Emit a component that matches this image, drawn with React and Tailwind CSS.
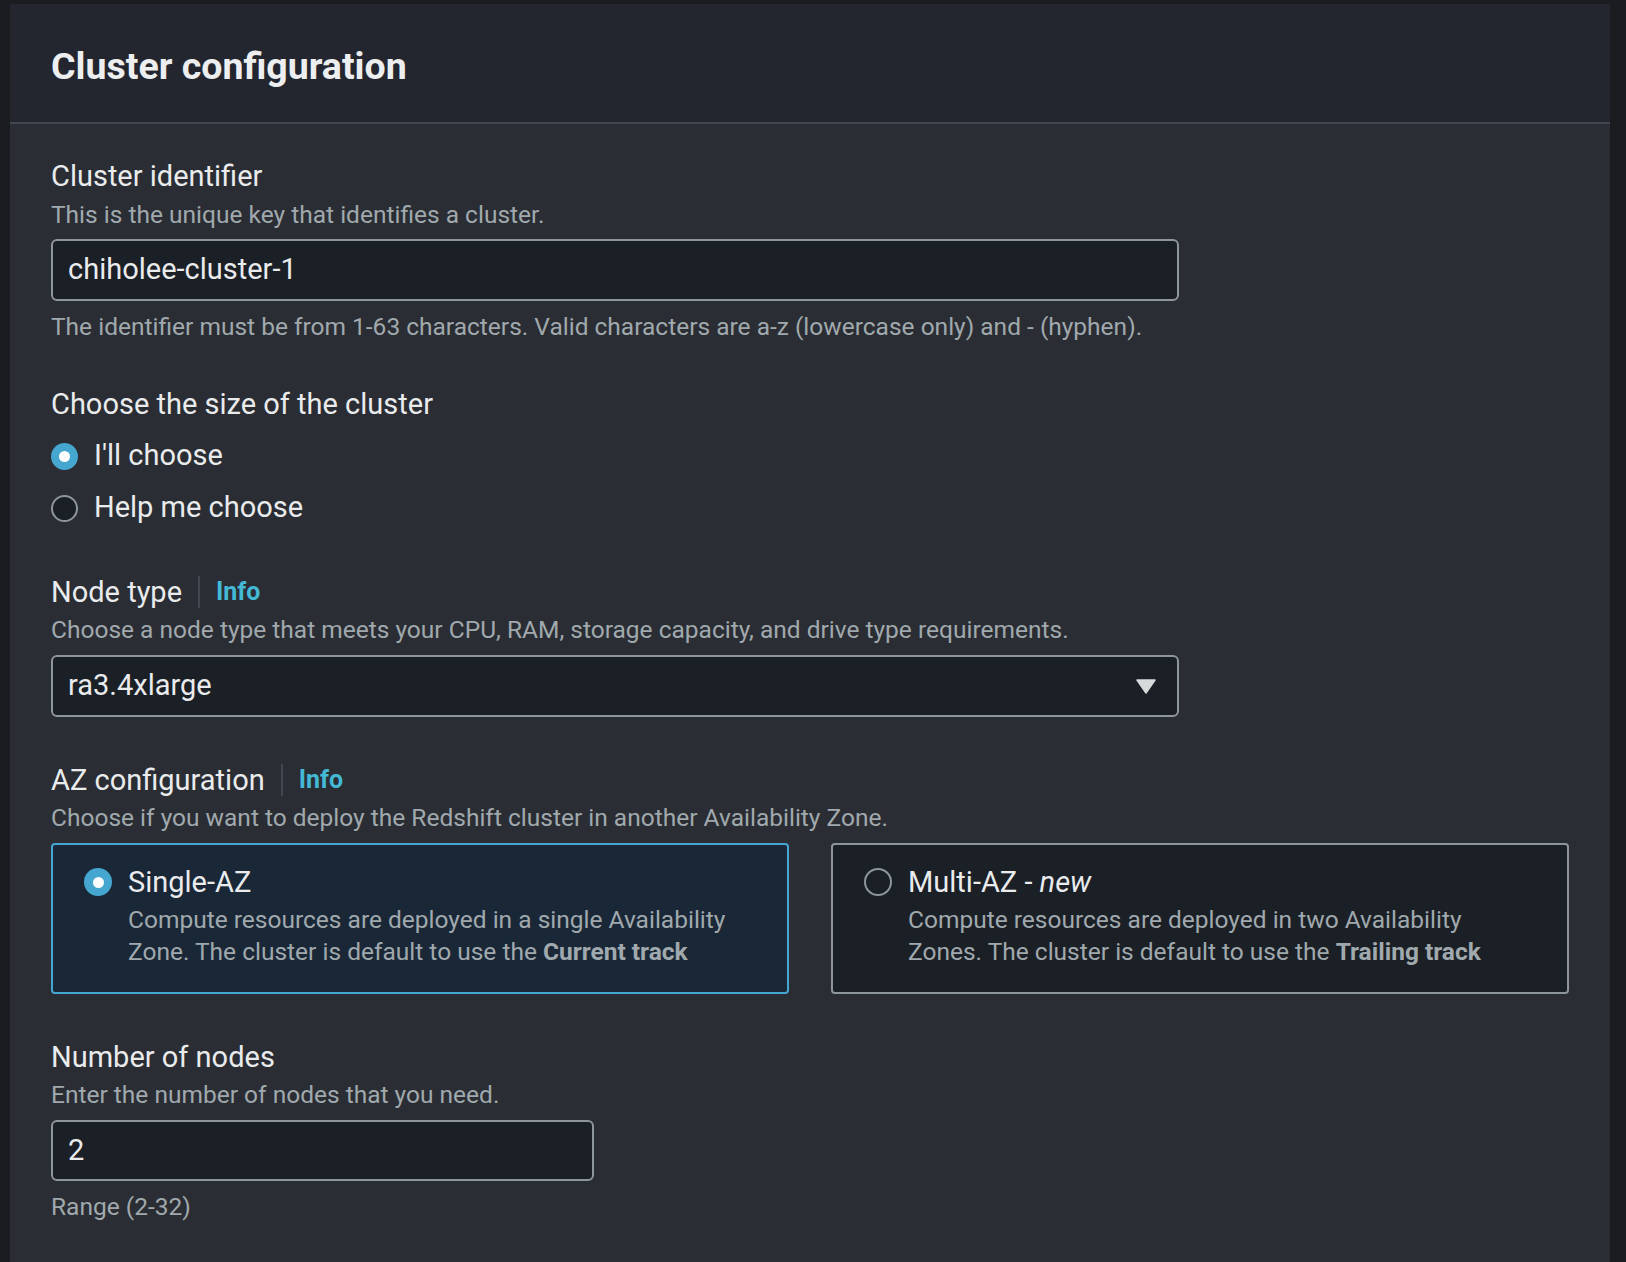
import React from 'react';

const font = { fontFamily: 'Roboto, "Open Sans", sans-serif' };

function Label({ children, info }) {
  return (
    <div className="flex items-center text-[29px] leading-[44px] text-[#e9ebed]">
      <span>{children}</span>
      {info && (
        <>
          <span className="mx-[16px] h-[32px] w-[2px] bg-[#414650]" />
          <span className="text-[25px] font-bold text-[#44b9d6]">Info</span>
        </>
      )}
    </div>
  );
}

function Desc({ children, className = '' }) {
  return <div className={`text-[24.5px] leading-[32px] text-[#a0a9ad] ${className}`}>{children}</div>;
}

function Radio({ checked, size = 'w-[27px] h-[27px]' }) {
  return checked ? (
    <span className={`${size} shrink-0 rounded-full bg-[#45a6cf] flex items-center justify-center`}>
      <span className="h-[11px] w-[11px] rounded-full bg-white" />
    </span>
  ) : (
    <span className={`${size} shrink-0 rounded-full border-2 border-[#8d9799] bg-[#1b1f26]`} />
  );
}

function Tile({ checked, title, children }) {
  return (
    <div
      className={`flex-1 rounded-[4px] border-2 pl-[31px] pr-[30px] pt-[15px] pb-[24px] ${
        checked ? 'border-[#45a6cf] bg-[#1a2737]' : 'border-[#8d9799] bg-[#1b1f26]'
      }`}
    >
      <div className="flex items-start gap-[16px]">
        <div className="flex h-[44px] items-center">
          <Radio checked={checked} size="w-[28px] h-[28px]" />
        </div>
        <div>
          <div className="text-[29px] leading-[44px] text-[#e9ebed]">{title}</div>
          <div className="text-[24.5px] leading-[32px] text-[#a0a9ad]">{children}</div>
        </div>
      </div>
    </div>
  );
}

export default function App() {
  return (
    <div className="min-h-[1262px] bg-[#1b1c20] pl-[10px] pr-[16px] pt-[4px]" style={font}>
      <div className="min-h-[1258px] bg-[#2a2d33]">
        <div className="flex h-[120px] items-center border-b-2 border-[#414650] bg-[#23262e] px-[41px] pt-[6px]">
          <h2 className="text-[37.5px] font-bold text-[#eceeef]">Cluster configuration</h2>
        </div>

        <div className="px-[41px] pt-[30px] pb-[40px]">
          <Label>Cluster identifier</Label>
          <Desc className="mt-[1px]">This is the unique key that identifies a cluster.</Desc>
          <div className="mt-[8px] flex h-[62px] w-[1128px] items-center rounded-[6px] border-2 border-[#8d9799] bg-[#1b1f26] px-[15px] text-[29px] text-[#e9ebed]">
            chiholee-cluster-1
          </div>
          <Desc className="mt-[10px]">
            The identifier must be from 1-63 characters. Valid characters are a-z (lowercase only) and - (hyphen).
          </Desc>

          <div className="mt-[39px]">
            <Label>Choose the size of the cluster</Label>
          </div>
          <div className="mt-[8px] flex h-[44px] items-center gap-[16px] text-[29px] text-[#e9ebed]">
            <Radio checked />
            <span>I'll choose</span>
          </div>
          <div className="mt-[8px] flex h-[44px] items-center gap-[16px] text-[29px] text-[#e9ebed]">
            <Radio />
            <span>Help me choose</span>
          </div>

          <div className="mt-[40px]">
            <Label info>Node type</Label>
          </div>
          <Desc>Choose a node type that meets your CPU, RAM, storage capacity, and drive type requirements.</Desc>
          <div className="mt-[9px] flex h-[62px] w-[1128px] items-center justify-between rounded-[6px] border-2 border-[#8d9799] bg-[#1b1f26] pl-[15px] pr-[21px] text-[29px] text-[#e9ebed]">
            <span>ra3.4xlarge</span>
            <svg width="20" height="15" viewBox="0 0 20 15">
              <path d="M1 1 H19 L10 14 Z" fill="#d5dbdb" stroke="#d5dbdb" strokeWidth="1.5" strokeLinejoin="round" />
            </svg>
          </div>

          <div className="mt-[41px]">
            <Label info>AZ configuration</Label>
          </div>
          <Desc>Choose if you want to deploy the Redshift cluster in another Availability Zone.</Desc>
          <div className="mt-[9px] flex w-[1518px] gap-[42px]">
            <Tile checked title="Single-AZ">
              Compute resources are deployed in a single Availability Zone. The cluster is default to use the{' '}
              <span className="font-bold">Current track</span>
            </Tile>
            <Tile
              title={
                <>
                  Multi-AZ - <i>new</i>
                </>
              }
            >
              Compute resources are deployed in two Availability Zones. The cluster is default to use the{' '}
              <span className="font-bold">Trailing track</span>
            </Tile>
          </div>

          <div className="mt-[41px]">
            <Label>Number of nodes</Label>
          </div>
          <Desc>Enter the number of nodes that you need.</Desc>
          <div className="mt-[9px] flex h-[61px] w-[543px] items-center rounded-[6px] border-2 border-[#8d9799] bg-[#1b1f26] px-[15px] text-[29px] text-[#e9ebed]">
            2
          </div>
          <Desc className="mt-[10px]">Range (2-32)</Desc>
        </div>
      </div>
    </div>
  );
}
